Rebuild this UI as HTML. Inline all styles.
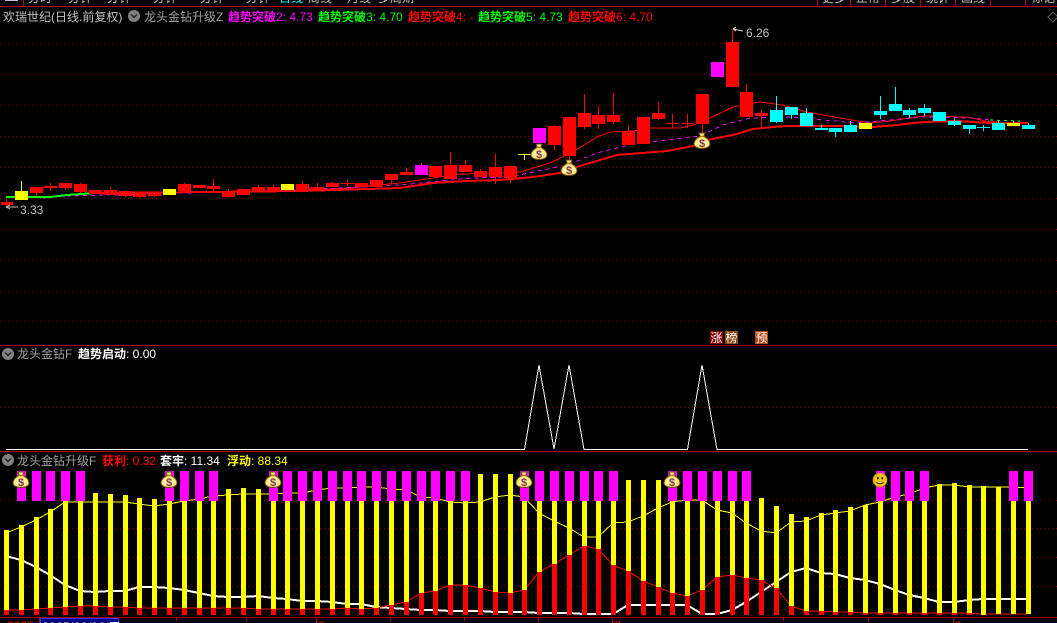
<!DOCTYPE html>
<html lang="zh"><head><meta charset="utf-8"><title>欢瑞世纪</title>
<style>
html,body{margin:0;padding:0;background:#000;width:1057px;height:623px;overflow:hidden}
svg{display:block;position:absolute;left:0;top:0}
text{font-family:"Liberation Sans","WenQuanYi Zen Hei","Noto Sans CJK SC",sans-serif;font-size:12px}
.b{font-weight:bold}
</style></head><body>
<svg width="1057" height="623" viewBox="0 0 1057 623" xmlns="http://www.w3.org/2000/svg">
<defs>
<g id="bag">
<path d="M-3-8h6l-1.200 3.200 1 .8c3 1.500 5.200 4.200 5.200 6.700 0 3-3.200 4.800-8 4.800s-8-1.800-8-4.800c0-2.500 2.200-5.200 5.200-6.700l1-.8z" fill="#ffe97a" stroke="#6a4a18" stroke-width="1"/>
<ellipse cx="0" cy="2" rx="5" ry="4" fill="#fff6b0"/>
<rect x="-2.500" y="-5.200" width="5" height="1.300" fill="#b07010"/>
<text x="0" y="6" text-anchor="middle" style="font-size:11px;font-weight:bold" fill="#8a3040">$</text>
</g>
<g id="chev">
<circle r="6" fill="#808080"/>
<path d="M-3-1.500l3 3 3-3" fill="none" stroke="#222" stroke-width="1.400"/>
</g>
</defs>

<!-- top strip -->
<g fill="#c0c0c0">
<text x="28" y="2">分时</text><text x="68" y="2">分钟</text><text x="107" y="2">分钟</text>
<text x="153" y="2">分钟</text><text x="200" y="2">分钟</text><text x="246" y="2">分钟</text>
<text x="279" y="2" fill="#00ffff">日线</text><text x="308" y="2">周线</text><text x="347" y="2">月线</text><text x="378" y="2">多周期</text>
<text x="822" y="2">更多</text><text x="856" y="2">正常</text><text x="891" y="2">多股</text><text x="926" y="2">统计</text><text x="961" y="2">画线</text><text x="1031" y="2">标记</text>
</g>
<g shape-rendering="crispEdges">
<rect x="5" y="0" width="13" height="1" fill="#c0c0c0"/>
<rect x="0" y="6" width="1057" height="1" fill="#c00000"/>
<rect x="23" y="0" width="1" height="6" fill="#c00000"/>
<path d="M817.500 0v6M850.500 0v6M885.500 0v6M920.500 0v6M955.500 0v6M990.500 0v6M1025.500 0v6" stroke="#c00000" fill="none"/>

<!-- grid -->
<path d="M0 43.500H1057M0 74.500H1057M0 105.500H1057M0 136.500H1057M0 167.500H1057M0 198.500H1057M0 229.500H1057M0 260.500H1057M0 291.500H1057M0 321.500H1057M0 407.500H1057M0 500.500H1057M0 528.500H1057M0 557.500H1057M0 586.500H1057" stroke="#7a0000" stroke-width="1" stroke-dasharray="1 3" fill="none"/>
<!-- pane separators -->
<rect x="0" y="345" width="1057" height="1" fill="#b00000"/>
<rect x="0" y="451" width="1057" height="1" fill="#b00000"/>
<rect x="0" y="617" width="1057" height="1" fill="#b00000"/>

<!-- MA lines in main chart -->
<path d="M95 193L200 192L290 191L350 188L400 183L433 178L460 174L500 173L520 172L550 163L573 152L597 137L610 132L633 131L650 128L680 128L693 125L710 118L733 107L760 102L783 105L807 112L840 118L870 123L890 121L923 116L967 117L990 122L1028 123" fill="none" stroke="#ff0000" stroke-width="1"/>
<path d="M43 198L67 196L150 194L250 191L343 188L400 185L440 181L473 178L510 177L543 170L567 165L597 153L633 144L667 140L700 136L723 125L750 118L790 117L857 123L923 117L973 118L990 120" fill="none" stroke="#ff00ff" stroke-width="1" stroke-dasharray="4 4"/>
<path d="M990 120L1020 121" fill="none" stroke="#00ff00" stroke-width="1" stroke-dasharray="3 4"/>
<path d="M95 193L210 192L300 191L400 188L433 183L467 181L500 180L533 177L560 173L583 165L617 155L667 151L693 146L707 140L733 135L753 129L773 127L787 126L840 126L873 127L897 125L923 122L957 121L990 123L1028 123" fill="none" stroke="#ff0000" stroke-width="2"/>
<path d="M6 197L50 197L67 195L95 193" fill="none" stroke="#00ff00" stroke-width="2"/>

<!-- candles -->
<path d="M6.500 199V208M36.500 193V196M50.500 183V191M65.500 188V190M80.500 183V193M110.500 187V195M125.500 196V197M139.500 197V198M154.500 192V197M184.500 183V191M213.500 179V193M228.500 189V197M258.500 185V187M273.500 185V187M302.500 181V184M317.500 183V187M332.500 182V183M347.500 180V186M391.500 180V184M406.500 168V172M450.500 152V165M465.500 160V165M480.500 169V171M495.500 154V184M510.500 165V183M554.500 125V150M569.500 156V160M584.500 94V129M598.500 106V129M613.500 93V124M628.500 125V131M658.500 102V120M672.500 114V128M687.500 114V128M702.500 124V133M732.500 29V42M746.500 84V92M761.500 110V128" stroke="#ff0000" fill="none"/>
<path d="M1 202h12v3h-12zM30 187h13v6h-13zM44 186h13v2h-13zM59 183h13v5h-13zM74 184h13v8h-13zM89 190h13v4h-13zM104 190h13v5h-13zM119 191h13v5h-13zM133 192h13v5h-13zM148 193h13v3h-13zM178 184h13v7h-13zM193 185h13v3h-13zM207 186h13v3h-13zM222 191h13v6h-13zM237 189h13v6h-13zM252 187h13v4h-13zM267 187h13v4h-13zM296 184h13v7h-13zM311 187h13v4h-13zM326 183h13v4h-13zM341 183h13v1h-13zM355 183h13v4h-13zM370 180h13v7h-13zM385 174h13v6h-13zM400 172h13v3h-13zM429 166h13v11h-13zM444 165h13v14h-13zM459 165h13v7h-13zM474 171h13v6h-13zM489 167h13v10h-13zM504 166h13v12h-13zM548 126h13v19h-13zM563 117h13v39h-13zM578 113h13v14h-13zM592 115h13v9h-13zM607 115h13v7h-13zM622 131h13v14h-13zM637 117h13v27h-13zM652 113h13v6h-13zM666 123h13v1h-13zM681 123h13v1h-13zM696 94h13v30h-13zM726 42h13v45h-13zM740 92h13v25h-13zM755 113h13v3h-13z" fill="#ff0000"/>
<path d="M776.500 96V123M791.500 115V119M806.500 108V113M821.500 125V128M835.500 132V137M850.500 121V125M880.500 96V119M895.500 87V104M909.500 108V118M924.500 104V116M954.500 118V126M969.500 129V134M983.500 125V131M998.500 121V123M1028.500 123V125" stroke="#00ffff" fill="none"/>
<path d="M770 110h13v12h-13zM785 107h13v8h-13zM800 113h13v13h-13zM815 128h13v2h-13zM829 128h13v4h-13zM844 125h13v7h-13zM874 111h13v4h-13zM889 104h13v7h-13zM903 110h13v5h-13zM918 108h13v5h-13zM933 112h13v9h-13zM948 121h13v4h-13zM963 125h13v4h-13zM977 127h13v1h-13zM992 123h13v7h-13zM1022 125h13v4h-13z" fill="#00ffff"/>
<path d="M21.500 181V191M524.500 155V160M1013.500 121V123" stroke="#ffff00" fill="none"/>
<path d="M15 191h13v9h-13zM163 189h13v6h-13zM281 184h13v6h-13zM518 154h13v1h-13zM859 123h13v6h-13zM1007 123h13v3h-13z" fill="#ffff00"/>
<path d="M421.500 163V165" stroke="#ff00ff" fill="none"/>
<path d="M415 165h13v10h-13zM533 128h13v15h-13zM711 62h13v15h-13z" fill="#ff00ff"/>
</g>

<!-- max/min labels -->
<g shape-rendering="crispEdges">
<path d="M6 207L10 205M6 207L10 209M6 207H18" stroke="#c0c0c0" fill="none" stroke-width="1"/>
<path d="M733 29L736 27M733 29L736 31M733 29L743 31" stroke="#c0c0c0" fill="none" stroke-width="1"/>
</g>
<text x="20" y="214" fill="#c0c0c0">3.33</text>
<text x="746" y="37" fill="#c0c0c0">6.26</text>
<path d="M1053 12l5 5-5 5-5-5z" fill="none" stroke="#606060"/>

<use href="#bag" x="539" y="152"/><use href="#bag" x="569" y="168"/><use href="#bag" x="702" y="141"/>

<!-- chips -->
<g shape-rendering="crispEdges">
<rect x="710" y="331" width="13" height="13" fill="#8b0000"/>
<rect x="725" y="331" width="13" height="13" fill="#8b4513"/>
<rect x="755" y="331" width="13" height="13" fill="#b8440f"/>
</g>
<g fill="#fff"><text x="710.500" y="342">涨</text><text x="725.500" y="342">榜</text><text x="755.500" y="342">预</text></g>

<g shape-rendering="crispEdges">
<!-- pane 2 -->
<path d="M6 449.500H524.500L539 365L554 449L569 365L584 449.500H687.500L702 365L717 449.500H1028" fill="none" stroke="#fff" stroke-width="1"/>

<!-- pane 3 lines -->
<path d="M6 556L21 560L36 567L50 575L65 585L80 591L95 592L110 591L125 591L139 587L154 587L169 588L184 590L199 593L213 596L228 597L243 597L258 596L273 598L287 599L302 601L317 601L332 602L347 604L361 604L376 607L391 608L406 609L421 610L435 610L450 611L465 611L480 611L495 612L510 612L524 612L539 613L554 613L569 613L584 614L598 614L613 614L628 605L643 605L658 605L672 605L687 605L702 614L717 614L732 610L746 602L761 592L776 582L791 572L806 568L821 573L835 574L850 578L865 580L880 584L895 590L909 595L924 598L939 602L954 602L969 600L983 599L998 599L1013 599L1028 599" fill="none" stroke="#fff" stroke-width="2"/>
<path d="M6 533L21 527L36 520L50 512L65 502L80 502L95 502L110 502L125 502L139 504L154 506L169 504L184 501L199 499L213 496L228 495L243 494L258 494L273 494L287 493L302 493L317 490L332 488L347 488L361 487L376 487L391 489L406 490L421 497L435 498L450 502L465 503L480 502L495 497L510 495L524 497L539 513L554 521L569 528L584 537L598 537L613 523L628 522L643 516L658 508L672 502L687 500L702 500L717 510L732 513L746 523L761 531L776 533L791 522L806 521L821 515L835 513L850 511L865 505L880 502L895 497L909 494L924 488L939 485L954 485L969 487L983 487L998 487L1013 487L1028 488" fill="none" stroke="#ffff00" stroke-width="1"/>
<path d="M6 610L21 610L36 609L50 608L65 607L80 606L95 606L110 607L125 607L139 608L154 608L169 608L184 608L199 608L213 608L228 608L243 608L258 609L273 609L287 609L302 609L317 609L332 609L347 608L361 609L376 608L391 605L406 602L421 593L435 591L450 585L465 585L480 588L495 592L510 593L524 590L539 572L554 564L569 555L584 546L598 549L613 565L628 571L643 581L658 587L672 593L687 596L702 590L717 577L732 575L746 578L761 580L776 588L791 606L806 611L821 611L835 612L850 612L865 613L880 613L895 613L909 613L924 613L939 613L954 613L969 613L983 614L998 614L1013 614L1028 614" fill="none" stroke="#ff0000" stroke-width="1"/>

<!-- pane 3 bars -->
<path d="M4 530h5v85h-5zM19 525h5v90h-5zM34 517h5v98h-5zM48 509h5v106h-5zM63 501h5v114h-5zM78 501h5v114h-5zM93 493h5v122h-5zM108 494h5v121h-5zM123 495h5v120h-5zM137 498h5v117h-5zM152 499h5v116h-5zM167 501h5v114h-5zM182 501h5v114h-5zM197 501h5v114h-5zM211 501h5v114h-5zM226 489h5v126h-5zM241 488h5v127h-5zM256 489h5v126h-5zM271 501h5v114h-5zM285 501h5v114h-5zM300 501h5v114h-5zM315 501h5v114h-5zM330 501h5v114h-5zM345 501h5v114h-5zM359 501h5v114h-5zM374 501h5v114h-5zM389 501h5v114h-5zM404 501h5v114h-5zM419 501h5v114h-5zM433 501h5v114h-5zM448 501h5v114h-5zM463 501h5v114h-5zM478 474h5v141h-5zM493 474h5v141h-5zM508 474h5v141h-5zM522 501h5v114h-5zM537 501h5v114h-5zM552 501h5v114h-5zM567 501h5v114h-5zM582 501h5v114h-5zM596 501h5v114h-5zM611 501h5v114h-5zM626 480h5v135h-5zM641 480h5v135h-5zM656 480h5v135h-5zM670 501h5v114h-5zM685 501h5v114h-5zM700 501h5v114h-5zM715 501h5v114h-5zM730 501h5v114h-5zM744 501h5v114h-5zM759 498h5v117h-5zM774 506h5v109h-5zM789 514h5v101h-5zM804 517h5v98h-5zM819 513h5v102h-5zM833 510h5v105h-5zM848 507h5v108h-5zM863 505h5v110h-5zM878 501h5v114h-5zM893 501h5v114h-5zM907 501h5v114h-5zM922 501h5v114h-5zM937 484h5v131h-5zM952 483h5v132h-5zM967 485h5v130h-5zM981 486h5v129h-5zM996 487h5v127h-5zM1011 501h5v113h-5zM1026 501h5v113h-5z" fill="#ffff00"/>
<path d="M4 610h5v5h-5zM19 610h5v5h-5zM34 609h5v6h-5zM48 608h5v7h-5zM63 607h5v8h-5zM78 606h5v9h-5zM93 606h5v9h-5zM108 607h5v8h-5zM123 607h5v8h-5zM137 608h5v7h-5zM152 608h5v7h-5zM167 608h5v7h-5zM182 608h5v7h-5zM197 608h5v7h-5zM211 608h5v7h-5zM226 608h5v7h-5zM241 608h5v7h-5zM256 609h5v6h-5zM271 609h5v6h-5zM285 609h5v6h-5zM300 609h5v6h-5zM315 609h5v6h-5zM330 609h5v6h-5zM345 608h5v7h-5zM359 609h5v6h-5zM374 608h5v7h-5zM389 605h5v10h-5zM404 602h5v13h-5zM419 593h5v22h-5zM433 591h5v24h-5zM448 585h5v30h-5zM463 585h5v30h-5zM478 588h5v27h-5zM493 592h5v23h-5zM508 593h5v22h-5zM522 590h5v25h-5zM537 572h5v43h-5zM552 564h5v51h-5zM567 555h5v60h-5zM582 546h5v69h-5zM596 549h5v66h-5zM611 565h5v50h-5zM626 571h5v44h-5zM641 581h5v34h-5zM656 587h5v28h-5zM670 593h5v22h-5zM685 596h5v19h-5zM700 590h5v25h-5zM715 577h5v38h-5zM730 575h5v40h-5zM744 578h5v37h-5zM759 580h5v35h-5zM774 588h5v27h-5zM789 606h5v9h-5zM804 611h5v4h-5zM819 611h5v4h-5zM833 612h5v3h-5zM848 612h5v3h-5zM863 613h5v2h-5zM878 613h5v2h-5zM893 613h5v2h-5zM907 613h5v2h-5zM922 613h5v2h-5zM937 613h5v2h-5zM952 613h5v2h-5zM967 613h5v2h-5z" fill="#ff0000"/>
<path d="M17 471h9v30h-9zM32 471h9v30h-9zM46 471h9v30h-9zM61 471h9v30h-9zM76 471h9v30h-9zM165 471h9v30h-9zM180 471h9v30h-9zM195 471h9v30h-9zM209 471h9v30h-9zM269 471h9v30h-9zM283 471h9v30h-9zM298 471h9v30h-9zM313 471h9v30h-9zM328 471h9v30h-9zM343 471h9v30h-9zM357 471h9v30h-9zM372 471h9v30h-9zM387 471h9v30h-9zM402 471h9v30h-9zM417 471h9v30h-9zM431 471h9v30h-9zM446 471h9v30h-9zM461 471h9v30h-9zM520 471h9v30h-9zM535 471h9v30h-9zM550 471h9v30h-9zM565 471h9v30h-9zM580 471h9v30h-9zM594 471h9v30h-9zM609 471h9v30h-9zM668 471h9v30h-9zM683 471h9v30h-9zM698 471h9v30h-9zM713 471h9v30h-9zM728 471h9v30h-9zM742 471h9v30h-9zM876 471h9v30h-9zM891 471h9v30h-9zM905 471h9v30h-9zM920 471h9v30h-9zM1009 471h9v30h-9zM1024 471h9v30h-9z" fill="#ff00ff"/>
</g>
<use href="#bag" x="21" y="480"/><use href="#bag" x="169" y="480"/><use href="#bag" x="273" y="480"/><use href="#bag" x="524" y="480"/><use href="#bag" x="672" y="480"/>
<g>
<circle cx="880" cy="480" r="7" fill="#f2c21a" stroke="#a88510" stroke-width="0.800"/>
<rect x="877" y="477" width="1.600" height="2.400" fill="#3a2a00"/><rect x="881.500" y="477" width="1.600" height="2.400" fill="#3a2a00"/>
<path d="M876.500 482c1.200 2.400 5.800 2.400 7 0" fill="none" stroke="#3a2a00" stroke-width="1"/>
</g>

<!-- bottom axis -->
<g shape-rendering="crispEdges">
<rect x="40" y="618" width="79" height="5" fill="#000080"/>
<rect x="40" y="618" width="1" height="5" fill="#3030ff"/><rect x="118" y="618" width="1" height="5" fill="#3030ff"/>
<rect x="40" y="618" width="79" height="1" fill="#3030ff"/>
<rect x="39" y="618" width="1" height="5" fill="#c00000"/>
<path d="M176.500 618v3M246.500 618v3M316.500 618v5M390.500 618v3M464.500 618v3M538.500 618v3M612.500 618v5M783.500 618v3M868.500 618v3M953.500 618v5" stroke="#c00000" fill="none"/>
</g>
<g>
<text x="7" y="630" fill="#ff0000">2025</text>
<text x="42" y="631" fill="#fff" style="letter-spacing:.3px">2025/06/06/五</text>
<text x="318" y="630" fill="#ff0000">8</text>
<text x="614" y="630" fill="#ff0000">7</text>
<text x="955" y="630" fill="#ff0000">9</text>
</g>

<!-- headers -->
<text x="3" y="21" fill="#c0c0c0">欢瑞世纪(日线.前复权)</text>
<use href="#chev" x="134" y="16"/>
<text x="144" y="21" fill="#a0a0a0">龙头金钻升级Z</text>
<text x="228" y="21" fill="#ff00ff"><tspan class="b">趋势突破</tspan>2: 4.73</text>
<text x="318" y="21" fill="#00ff00"><tspan class="b">趋势突破</tspan>3: 4.70</text>
<text x="408" y="21" fill="#ff0000"><tspan class="b">趋势突破</tspan>4: -</text>
<text x="478" y="21" fill="#00ff00"><tspan class="b">趋势突破</tspan>5: 4.73</text>
<text x="568" y="21" fill="#ff0000"><tspan class="b">趋势突破</tspan>6: 4.70</text>

<use href="#chev" x="8" y="354"/>
<text x="17" y="358" fill="#a0a0a0">龙头金钻F</text>
<text x="78" y="358" fill="#fff"><tspan class="b">趋势启动</tspan>: 0.00</text>

<use href="#chev" x="8" y="460"/>
<text x="17" y="465" fill="#a0a0a0">龙头金钻升级F</text>
<text x="102" y="465" fill="#ff0000"><tspan class="b">获利</tspan>: 0.32</text>
<text x="160" y="465" fill="#fff"><tspan class="b">套牢</tspan>: 11.34</text>
<text x="227" y="465" fill="#ffff00"><tspan class="b">浮动</tspan>: 88.34</text>
</svg>
</body></html>
